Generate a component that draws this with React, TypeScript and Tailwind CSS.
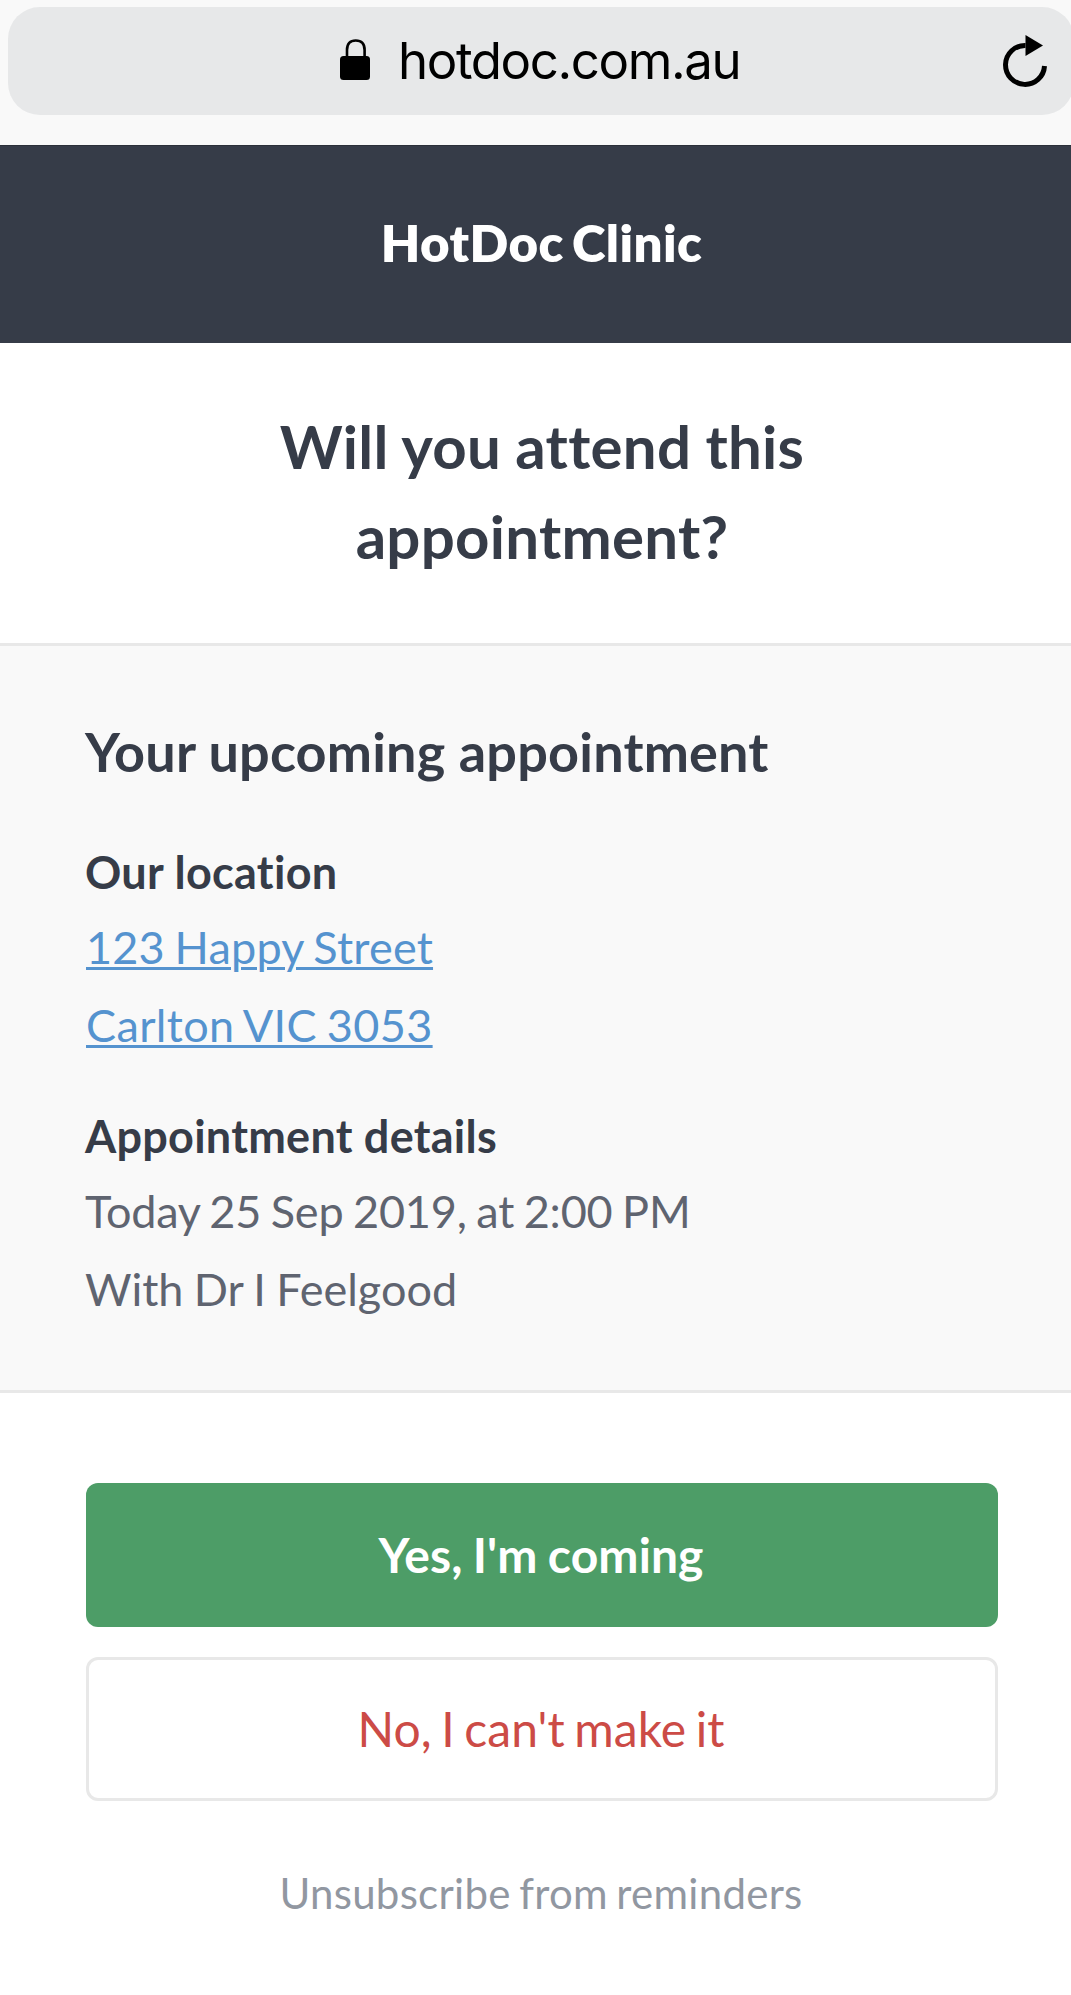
function LockIcon() {
  return (
    <svg width="30" height="41" viewBox="0 0 30 41" fill="none">
      <path d="M7 19V11C7 4.5 10 1.5 15.7 1.5S24.6 4.5 24.6 11V19" stroke="black" strokeWidth="2.6" />
      <rect x="0" y="17" width="30" height="24" rx="3.5" fill="black" />
    </svg>
  );
}

function ReloadIcon() {
  return (
    <svg width="45" height="53" viewBox="0 0 45 53" fill="none">
      <path d="M22.5 10.4A19.5 19.5 0 1 0 41.5 31" stroke="black" strokeWidth="5" />
      <path d="M22.5 0L40 10.5L22.5 21Z" fill="black" />
    </svg>
  );
}

function AddressBar() {
  return (
    <div className="h-[145px] bg-[#f9f9f9] pt-[7px] pl-2">
      <div className="flex h-[108px] w-[1066px] items-start rounded-[32px] bg-[#e7e8e9]">
        <div className="mt-8 ml-[332px]">
          <LockIcon />
        </div>
        <span className="mt-[21px] ml-7 w-[400px] font-['Inter'] text-[51px] leading-[66px] tracking-[-1.4px] whitespace-nowrap text-black">
          hotdoc.com.au
        </span>
        <div className="mt-7 ml-[205px]">
          <ReloadIcon />
        </div>
      </div>
    </div>
  );
}

function AppointmentInfo() {
  return (
    <section className="h-[750px] border-y-3 border-[#e8e8e8] bg-[#f9f9f9] px-[85px] pt-[65px] text-[45px] leading-[78px] text-[#5f6470]">
      <h2 className="text-[54px] leading-[82px] font-bold tracking-[0.18px] text-[#363c48]">Your upcoming appointment</h2>
      <h3 className="mt-[43px] leading-[72px] font-bold tracking-[0.3px] text-[#363c48]">Our location</h3>
      <a
        href="#"
        className="ml-px block w-fit tracking-[0.2px] text-[#5593cf] underline decoration-[3px] underline-offset-[3px] [word-spacing:-2px]"
      >
        123 Happy Street
        <br />
        <span className="tracking-[0.35px]">Carlton VIC 3053</span>
      </a>
      <h3 className="mt-9 leading-[72px] font-bold tracking-[0.25px] text-[#363c48]">Appointment details</h3>
      <p className="tracking-[-0.2px] [word-spacing:-1.7px]">Today 25 Sep 2019, at 2:00 PM</p>
      <p className="[word-spacing:-1.2px]">With Dr I Feelgood</p>
    </section>
  );
}

export default function App() {
  return (
    <div className="h-[1995px] w-[1071px] overflow-hidden bg-white font-['Lato',sans-serif] [font-variant-ligatures:none]">
      <AddressBar />
      {/* page content is slightly wider than the viewport */}
      <div className="w-[1084px]">
        <header className="flex h-[198px] items-center justify-center border-t border-[#2b3039] bg-[#363c48] pr-px pb-[3px]">
          <h1 className="text-[51px] leading-[72px] font-extrabold tracking-[0.4px] text-white [word-spacing:-4px]">HotDoc Clinic</h1>
        </header>
        <div className="h-[300px] pt-[58px] text-center text-[60px] leading-[90px] font-bold tracking-[0.25px] text-[#363c48] [word-spacing:-0.6px]">
          Will you attend this
          <br />
          appointment?
        </div>
        <AppointmentInfo />
        <div className="flex flex-col px-[86px] pt-[90px] text-center">
          <button className="h-36 rounded-xl bg-[#4d9d67] pr-[2px] text-[48px] font-bold tracking-[0.1px] text-white [word-spacing:-1.5px]">
            Yes, I'm coming
          </button>
          <button className="mt-[30px] h-36 rounded-xl border-3 border-[#e8e8e8] pr-[2px] text-[48px] tracking-[0.08px] text-[#cc4b46] [word-spacing:-2.9px]">
            No, I can't make it
          </button>
          <a href="#" className="mt-[62px] pr-[2px] text-[42px] leading-[60px] tracking-[0.28px] text-[#9197a1] [word-spacing:-2.5px]">
            Unsubscribe from reminders
          </a>
        </div>
      </div>
    </div>
  );
}
